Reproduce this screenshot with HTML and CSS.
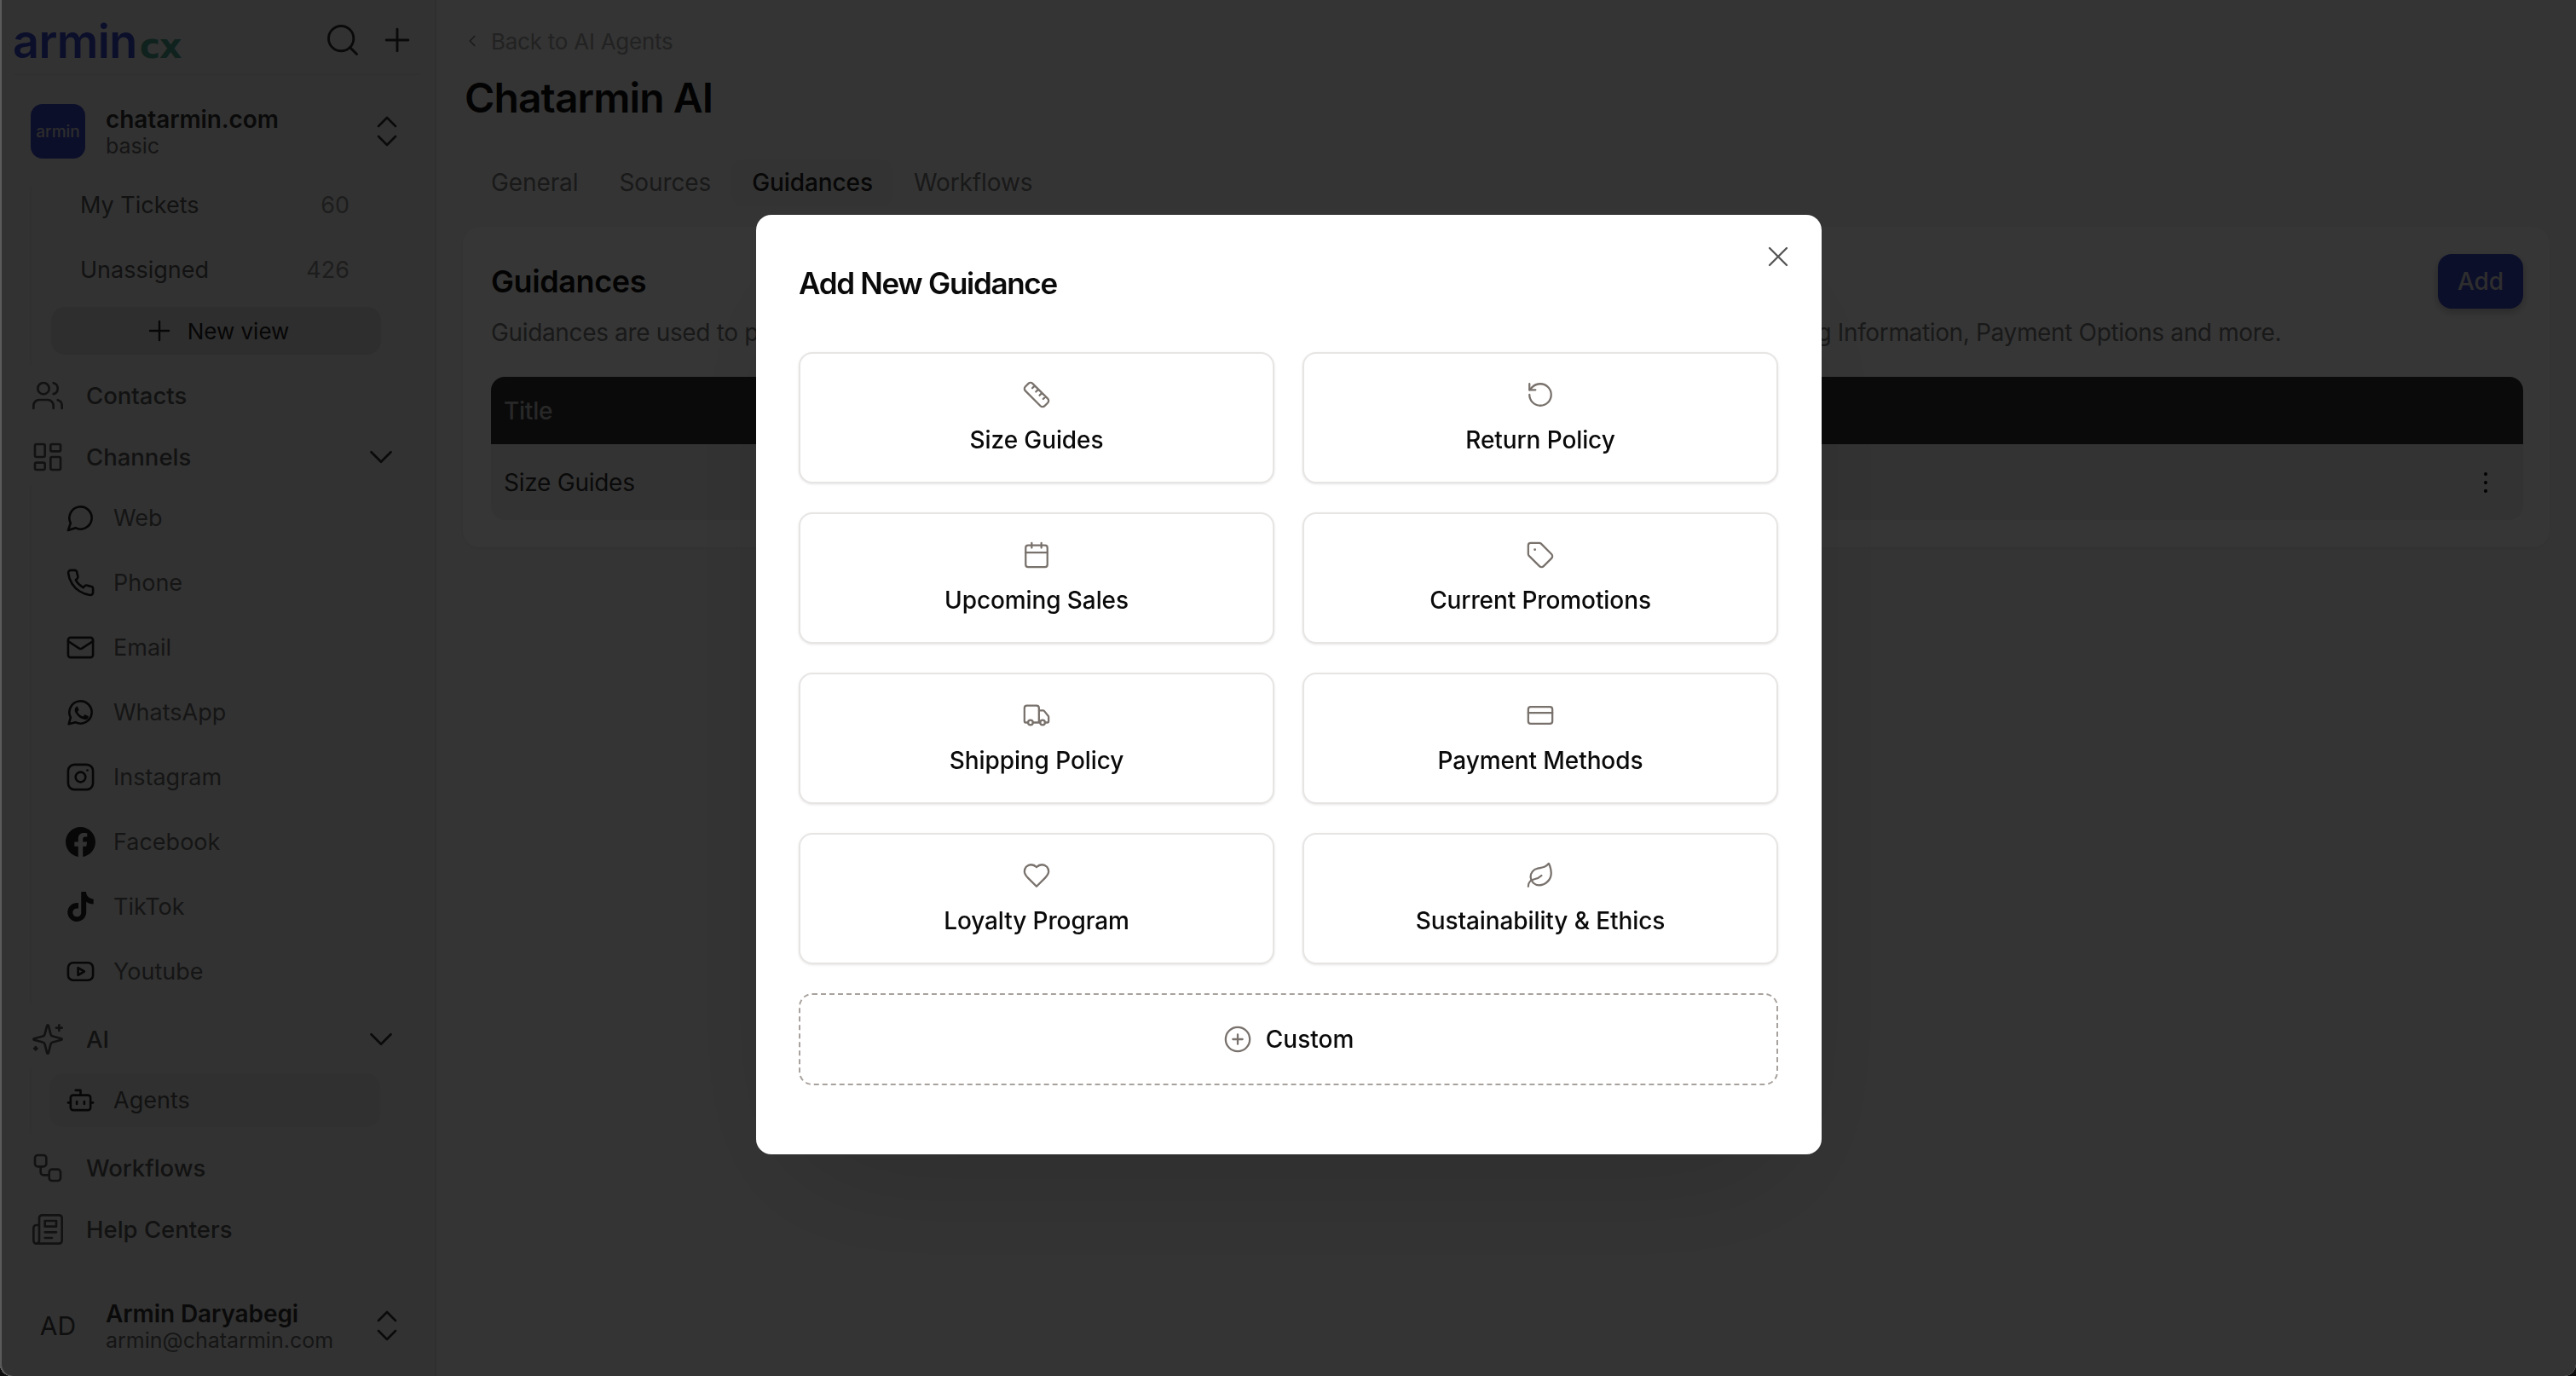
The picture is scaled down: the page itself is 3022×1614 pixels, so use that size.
FILE: index.html
```html
<!DOCTYPE html>
<html lang="en">
<head>
<meta charset="utf-8">
<title>Chatarmin AI</title>
<link rel="stylesheet" href="styles.css">
</head>
<body>
<svg class="sprite" xmlns="http://www.w3.org/2000/svg">
  <symbol id="i-search" viewBox="0 0 24 24"><circle cx="11" cy="11" r="8"/><path d="m21 21-4.3-4.3"/></symbol>
  <symbol id="i-plus" viewBox="0 0 24 24"><path d="M5 12h14M12 5v14"/></symbol>
  <symbol id="i-updown" viewBox="0 0 24 24"><path d="m7 15 5 5 5-5M7 9l5-5 5 5"/></symbol>
  <symbol id="i-down" viewBox="0 0 24 24"><path d="m6 9 6 6 6-6"/></symbol>
  <symbol id="i-users" viewBox="0 0 24 24"><path d="M16 21v-2a4 4 0 0 0-4-4H6a4 4 0 0 0-4 4v2"/><circle cx="9" cy="7" r="4"/><path d="M22 21v-2a4 4 0 0 0-3-3.87M16 3.13a4 4 0 0 1 0 7.75"/></symbol>
  <symbol id="i-grid" viewBox="0 0 24 24"><rect x="3" y="3" width="7" height="9" rx="1"/><rect x="14" y="3" width="7" height="5" rx="1"/><rect x="14" y="12" width="7" height="9" rx="1"/><rect x="3" y="16" width="7" height="5" rx="1"/></symbol>
  <symbol id="i-chat" viewBox="0 0 24 24"><path d="M7.9 20A9 9 0 1 0 4 16.1L2 22Z"/></symbol>
  <symbol id="i-phone" viewBox="0 0 24 24"><path d="M22 16.92v3a2 2 0 0 1-2.18 2 19.79 19.79 0 0 1-8.63-3.07 19.5 19.5 0 0 1-6-6 19.79 19.79 0 0 1-3.07-8.67A2 2 0 0 1 4.11 2h3a2 2 0 0 1 2 1.72 12.84 12.84 0 0 0 .7 2.81 2 2 0 0 1-.45 2.11L8.09 9.91a16 16 0 0 0 6 6l1.27-1.27a2 2 0 0 1 2.11-.45 12.84 12.84 0 0 0 2.81.7A2 2 0 0 1 22 16.92z"/></symbol>
  <symbol id="i-mail" viewBox="0 0 24 24"><rect x="2" y="4" width="20" height="16" rx="2"/><path d="m22 7-8.97 5.7a1.94 1.94 0 0 1-2.06 0L2 7"/></symbol>
  <symbol id="i-whatsapp" viewBox="0 0 24 24"><path d="M7.9 20A9 9 0 1 0 4 16.1L2.5 21.5Z"/><path class="fill" d="M9.2 7.4c-.3 0-.7.1-1 .5-.3.4-.9 1-.9 2.3 0 1.3 1 2.6 1.1 2.8.1.2 1.9 3 4.7 4.1 2.3.9 2.8.7 3.3.7.5 0 1.6-.7 1.8-1.3.2-.6.2-1.2.2-1.3-.1-.1-.3-.2-.6-.3l-2-1c-.3-.1-.5-.1-.7.2l-.9 1.1c-.2.2-.3.2-.6.1-.3-.1-1.2-.5-2.3-1.4-.9-.8-1.5-1.7-1.6-2-.2-.3 0-.5.1-.6l.8-1c.1-.2.1-.3 0-.5l-.9-2.1c-.2-.5-.5-.5-.7-.5h-.8z"/></symbol>
  <symbol id="i-instagram" viewBox="0 0 24 24"><rect x="2" y="2" width="20" height="20" rx="5"/><circle cx="12" cy="12" r="4"/><path d="M17.5 6.5h.01"/></symbol>
  <symbol id="i-facebook" viewBox="0 0 24 24"><path class="fill" d="M24 12.07C24 5.4 18.63 0 12 0S0 5.4 0 12.07c0 6.03 4.39 11.02 10.13 11.93v-8.44H7.08v-3.49h3.05V9.41c0-3.02 1.79-4.69 4.53-4.69 1.31 0 2.68.23 2.68.23v2.97h-1.51c-1.49 0-1.96.93-1.96 1.88v2.27h3.33l-.53 3.49h-2.8V24C19.61 23.09 24 18.1 24 12.07z"/></symbol>
  <symbol id="i-tiktok" viewBox="0 0 24 24"><path class="fill" d="M12.525.02c1.31-.02 2.61-.01 3.91-.02.08 1.53.63 3.09 1.75 4.17 1.12 1.11 2.7 1.62 4.24 1.79v4.03c-1.44-.05-2.89-.35-4.2-.97-.57-.26-1.1-.59-1.62-.93-.01 2.92.01 5.84-.02 8.75-.08 1.4-.54 2.79-1.35 3.94-1.31 1.92-3.58 3.17-5.91 3.21-1.43.08-2.86-.31-4.08-1.03-2.02-1.19-3.44-3.37-3.65-5.71-.02-.5-.03-1-.01-1.49.18-1.9 1.12-3.72 2.58-4.96 1.66-1.44 3.98-2.13 6.15-1.72.02 1.48-.04 2.96-.04 4.44-.99-.32-2.15-.23-3.02.37-.63.41-1.11 1.04-1.36 1.75-.21.51-.15 1.07-.14 1.61.24 1.64 1.82 3.02 3.5 2.87 1.12-.01 2.19-.66 2.77-1.61.19-.33.4-.67.41-1.06.1-1.79.06-3.57.07-5.36.01-4.03-.01-8.05.02-12.07z"/></symbol>
  <symbol id="i-youtube" viewBox="0 0 24 24"><rect x="2" y="5" width="20" height="14" rx="4"/><path d="m10 9 5 3-5 3z"/></symbol>
  <symbol id="i-sparkles" viewBox="0 0 24 24"><path d="M9.937 15.5A2 2 0 0 0 8.5 14.063l-6.135-1.582a.5.5 0 0 1 0-.962L8.5 9.936A2 2 0 0 0 9.937 8.5l1.582-6.135a.5.5 0 0 1 .963 0L14.063 8.5A2 2 0 0 0 15.5 9.937l6.135 1.581a.5.5 0 0 1 0 .964L15.5 14.063a2 2 0 0 0-1.437 1.437l-1.582 6.135a.5.5 0 0 1-.963 0z"/><path d="M20 2v4M22 4h-4M3.5 17.5v2M4.5 18.5h-2"/></symbol>
  <symbol id="i-bot" viewBox="0 0 24 24"><path d="M12 8V4H8"/><rect x="4" y="8" width="16" height="12" rx="2"/><path d="M2 14h2M20 14h2M15 13v2M9 13v2"/></symbol>
  <symbol id="i-workflow" viewBox="0 0 24 24"><rect x="3" y="3" width="8" height="8" rx="2"/><path d="M7 11v4a2 2 0 0 0 2 2h4"/><rect x="13" y="13" width="8" height="8" rx="2"/></symbol>
  <symbol id="i-news" viewBox="0 0 24 24"><path d="M4 22h16a2 2 0 0 0 2-2V4a2 2 0 0 0-2-2H8a2 2 0 0 0-2 2v16a2 2 0 0 1-2 2Zm0 0a2 2 0 0 1-2-2v-9c0-1.1.9-2 2-2h2"/><path d="M18 14h-8M15 18h-5M10 6h8v4h-8V6Z"/></symbol>
  <symbol id="i-kebab" viewBox="0 0 24 24"><circle class="fill" cx="12" cy="5" r="1.5"/><circle class="fill" cx="12" cy="12" r="1.5"/><circle class="fill" cx="12" cy="19" r="1.5"/></symbol>
  <symbol id="i-back" viewBox="0 0 24 24"><path d="m15 18-6-6 6-6"/></symbol>
  <symbol id="i-x" viewBox="0 0 24 24"><path d="M18 6 6 18M6 6l12 12"/></symbol>
  <symbol id="i-ruler" viewBox="0 0 24 24"><path d="M21.3 15.3a2.4 2.4 0 0 1 0 3.4l-2.6 2.6a2.4 2.4 0 0 1-3.4 0L2.7 8.7a2.41 2.41 0 0 1 0-3.4l2.6-2.6a2.41 2.41 0 0 1 3.4 0ZM14.5 12.5l2-2M11.5 9.5l2-2M8.5 6.5l2-2M17.5 15.5l2-2"/></symbol>
  <symbol id="i-return" viewBox="0 0 24 24"><path d="M3 12a9 9 0 1 0 9-9 9.75 9.75 0 0 0-6.74 2.74L3 8"/><path d="M3 3v5h5"/></symbol>
  <symbol id="i-calendar" viewBox="0 0 24 24"><path d="M8 2v4M16 2v4"/><rect x="3" y="4" width="18" height="18" rx="2"/><path d="M3 10h18"/></symbol>
  <symbol id="i-tag" viewBox="0 0 24 24"><path d="M12.586 2.586A2 2 0 0 0 11.172 2H4a2 2 0 0 0-2 2v7.172a2 2 0 0 0 .586 1.414l8.704 8.704a2.426 2.426 0 0 0 3.42 0l6.58-6.58a2.426 2.426 0 0 0 0-3.42z"/><circle class="fill" cx="7.5" cy="7.5" r="1"/></symbol>
  <symbol id="i-truck" viewBox="0 0 24 24"><path d="M14 18V6a2 2 0 0 0-2-2H4a2 2 0 0 0-2 2v11a1 1 0 0 0 1 1h2M15 18H9M19 18h2a1 1 0 0 0 1-1v-3.65a1 1 0 0 0-.22-.624l-3.48-4.35A1 1 0 0 0 17.52 8H14"/><circle cx="17" cy="18" r="2"/><circle cx="7" cy="18" r="2"/></symbol>
  <symbol id="i-card" viewBox="0 0 24 24"><rect x="2" y="5" width="20" height="14" rx="2"/><path d="M2 10h20"/></symbol>
  <symbol id="i-heart" viewBox="0 0 24 24"><path d="M19 14c1.49-1.46 3-3.21 3-5.5A5.5 5.5 0 0 0 16.5 3c-1.76 0-3 .5-4.5 2-1.5-1.5-2.74-2-4.5-2A5.5 5.5 0 0 0 2 8.5c0 2.3 1.5 4.05 3 5.5l7 7Z"/></symbol>
  <symbol id="i-leaf" viewBox="0 0 24 24"><path d="M11 20A7 7 0 0 1 9.8 6.1C15.5 5 17 4.48 19 2c1 2 2 4.18 2 8 0 5.5-4.78 10-10 10Z"/><path d="M2 21c0-3 1.85-5.36 5.08-6C9.5 14.52 12 13 13 12"/></symbol>
  <symbol id="i-pluscircle" viewBox="0 0 24 24"><circle cx="12" cy="12" r="10"/><path d="M8 12h8M12 8v8"/></symbol>
</svg>

<div class="app">
  <aside class="sidebar">
    <header class="side-head">
      <div class="logo"><span class="logo-a">armin</span><span class="logo-b">cx</span></div>
      <div class="head-actions">
        <svg class="ic ic-head"><use href="#i-search"/></svg>
        <svg class="ic ic-head"><use href="#i-plus"/></svg>
      </div>
    </header>

    <div class="account account-top">
      <div class="avatar avatar-brand">armin</div>
      <div class="account-text">
        <div class="account-name">chatarmin.com</div>
        <div class="account-sub">basic</div>
      </div>
      <svg class="ic ic-updown"><use href="#i-updown"/></svg>
    </div>

    <div class="tree tree-views">
      <div class="view-row"><span>My Tickets</span><span class="count">60</span></div>
      <div class="view-row"><span>Unassigned</span><span class="count">426</span></div>
      <div class="new-view"><svg class="ic ic-newplus"><use href="#i-plus"/></svg><span>New view</span></div>
    </div>

    <nav class="nav nav-a">
      <div class="nav-row"><svg class="ic ic-nav"><use href="#i-users"/></svg><span>Contacts</span></div>
      <div class="nav-row"><svg class="ic ic-nav"><use href="#i-grid"/></svg><span>Channels</span><svg class="ic ic-down"><use href="#i-down"/></svg></div>
    </nav>

    <div class="tree tree-channels">
      <div class="sub-row"><svg class="ic ic-sub"><use href="#i-chat"/></svg><span>Web</span></div>
      <div class="sub-row"><svg class="ic ic-sub"><use href="#i-phone"/></svg><span>Phone</span></div>
      <div class="sub-row"><svg class="ic ic-sub"><use href="#i-mail"/></svg><span>Email</span></div>
      <div class="sub-row"><svg class="ic ic-sub"><use href="#i-whatsapp"/></svg><span>WhatsApp</span></div>
      <div class="sub-row"><svg class="ic ic-sub"><use href="#i-instagram"/></svg><span>Instagram</span></div>
      <div class="sub-row"><svg class="ic ic-sub"><use href="#i-facebook"/></svg><span>Facebook</span></div>
      <div class="sub-row"><svg class="ic ic-sub"><use href="#i-tiktok"/></svg><span>TikTok</span></div>
      <div class="sub-row"><svg class="ic ic-sub"><use href="#i-youtube"/></svg><span>Youtube</span></div>
    </div>

    <nav class="nav nav-b">
      <div class="nav-row"><svg class="ic ic-nav"><use href="#i-sparkles"/></svg><span>AI</span><svg class="ic ic-down"><use href="#i-down"/></svg></div>
    </nav>

    <div class="tree tree-ai">
      <div class="sub-row sub-row-active"><svg class="ic ic-sub"><use href="#i-bot"/></svg><span>Agents</span></div>
    </div>

    <nav class="nav nav-c">
      <div class="nav-row"><svg class="ic ic-nav"><use href="#i-workflow"/></svg><span>Workflows</span></div>
      <div class="nav-row"><svg class="ic ic-nav"><use href="#i-news"/></svg><span>Help Centers</span></div>
    </nav>

    <div class="account account-bottom">
      <div class="avatar avatar-user">AD</div>
      <div class="account-text">
        <div class="account-name">Armin Daryabegi</div>
        <div class="account-sub account-mail">armin@chatarmin.com</div>
      </div>
      <svg class="ic ic-updown"><use href="#i-updown"/></svg>
    </div>
  </aside>

  <main class="main">
    <a class="back"><svg class="ic ic-back"><use href="#i-back"/></svg><span>Back to AI Agents</span></a>
    <h1 class="page-title">Chatarmin AI</h1>
    <div class="tabs">
      <div class="tab">General</div>
      <div class="tab">Sources</div>
      <div class="tab tab-active">Guidances</div>
      <div class="tab">Workflows</div>
    </div>
    <section class="panel">
      <div class="panel-head">
        <div>
          <h2 class="panel-title">Guidances</h2>
          <p class="panel-desc">Guidances are used to provide your AI Agent with important information about your Store, such as Store Policies, Shipping Information, Payment Options and more.</p>
        </div>
        <button class="add-btn">Add</button>
      </div>
      <div class="table">
        <div class="table-head">Title</div>
        <div class="table-row"><span>Size Guides</span><svg class="ic ic-kebab"><use href="#i-kebab"/></svg></div>
      </div>
    </section>
  </main>
</div>

<div class="overlay">
  <div class="modal" role="dialog">
    <svg class="ic modal-close"><use href="#i-x"/></svg>
    <h3 class="modal-title">Add New Guidance</h3>
    <div class="choices">
      <div class="choice"><svg class="ic ic-choice"><use href="#i-ruler"/></svg><span>Size Guides</span></div>
      <div class="choice"><svg class="ic ic-choice"><use href="#i-return"/></svg><span>Return Policy</span></div>
      <div class="choice"><svg class="ic ic-choice"><use href="#i-calendar"/></svg><span>Upcoming Sales</span></div>
      <div class="choice"><svg class="ic ic-choice"><use href="#i-tag"/></svg><span>Current Promotions</span></div>
      <div class="choice"><svg class="ic ic-choice"><use href="#i-truck"/></svg><span>Shipping Policy</span></div>
      <div class="choice"><svg class="ic ic-choice"><use href="#i-card"/></svg><span>Payment Methods</span></div>
      <div class="choice"><svg class="ic ic-choice"><use href="#i-heart"/></svg><span>Loyalty Program</span></div>
      <div class="choice"><svg class="ic ic-choice"><use href="#i-leaf"/></svg><span>Sustainability &amp; Ethics</span></div>
    </div>
    <div class="custom"><svg class="ic ic-choice"><use href="#i-pluscircle"/></svg><span>Custom</span></div>
  </div>
</div>
</body>
</html>
```

FILE: styles.css
```css
* { box-sizing: border-box; }
html, body { margin: 0; height: 100%; background: #0c0c0c; }
body {
  width: 3022px;
  height: 1614px;
  overflow: hidden;
  font-family: Inter, "Liberation Sans", sans-serif;
  font-size: 28px;
  color: #0a0a0a;
}
.sprite { display: none; }
.ic { display: block; flex: none; fill: none; stroke: currentColor; stroke-linecap: round; stroke-linejoin: round; }
.fill { fill: currentColor; stroke: none; }

.app {
  display: flex;
  width: 3022px;
  height: 1614px;
  background: #f5f5f5;
  border-radius: 0 0 14px 14px;
  overflow: hidden;
}

/* Sidebar */
.sidebar {
  width: 512px;
  flex: none;
  display: flex;
  flex-direction: column;
  background: #ededed;
  border-right: 2px solid #dcdcdc;
  color: #555;
}
.side-head {
  height: 88px;
  margin: 0 16px;
  border-bottom: 2px solid #e4e4e4;
  display: flex;
  align-items: center;
  justify-content: space-between;
  flex: none;
}
.logo { display: flex; align-items: baseline; margin-top: 12px; margin-left: -1px; }
.logo-a { font-size: 54px; font-weight: 600; color: #3a48c8; letter-spacing: -0.6px; line-height: 1; }
.logo-b { font-family: "DejaVu Sans", sans-serif; font-weight: 700; font-size: 41px; line-height: 1; margin-left: 3px; color: #4f9f8a; letter-spacing: -1px; }
.head-actions { display: flex; gap: 20px; margin: 8px 6px 0 0; color: #333; }
.ic-head { width: 44px; height: 44px; stroke-width: 1.6; }

.account { display: flex; align-items: center; height: 64px; flex: none; padding-left: 36px; }
.account-top { margin-top: 34px; }
.account-bottom { margin-top: auto; margin-bottom: 27px; }
.avatar { width: 64px; height: 64px; flex: none; display: flex; align-items: center; justify-content: center; }
.avatar-brand { background: #3b46c4; color: #d0d0d0; border-radius: 14px; font-size: 19px; font-weight: 500; }
.avatar-user { border-radius: 50%; background: #ececec; font-size: 30px; color: #444; }
.account-text { margin-left: 24px; flex: 1; min-width: 0; }
.account-name { font-size: 28px; font-weight: 600; line-height: 34px; color: #333; white-space: nowrap; letter-spacing: -0.1px; }
.account-sub { font-size: 25px; line-height: 30px; color: #666; margin-top: -1px; }
.account-mail { white-space: nowrap; }
.ic-updown { width: 48px; height: 48px; stroke-width: 1.35; color: #333; margin-right: 32px; }

.tree { margin-left: 35px; border-left: 2px solid #e2e2e2; flex: none; }
.tree-views { margin-top: 32px; padding-bottom: 14px; }
.view-row {
  height: 44px;
  margin-bottom: 32px;
  padding: 0 100px 0 57px;
  display: flex;
  align-items: center;
  justify-content: space-between;
  font-size: 27px;
  color: #555;
}
.view-row:nth-child(2) { margin-bottom: 22px; }
.count { color: #888; }
.new-view {
  margin-left: 23px;
  width: 387px;
  height: 56px;
  border-radius: 16px;
  background: #d8d8d8;
  display: flex;
  align-items: center;
  justify-content: center;
  gap: 14px;
  font-size: 26px;
  color: #222;
}
.ic-newplus { width: 38px; height: 38px; stroke-width: 1.5; }

.nav { display: flex; flex-direction: column; gap: 4px; flex: none; }
.nav-b { margin-top: 8px; }
.nav-c { margin-top: 5px; }
.nav-row {
  height: 68px;
  display: flex;
  align-items: center;
  padding-left: 36px;
  gap: 25px;
  font-size: 27.5px;
  font-weight: 500;
  color: #555;
}
.ic-nav { width: 40px; height: 40px; stroke-width: 1.6; color: #555; }
.ic-down { width: 46px; height: 46px; stroke-width: 1.45; color: #333; margin-left: auto; margin-right: 40px; }

.tree-channels { margin-top: -1px; }
.sub-row {
  height: 76px;
  margin-left: 21px;
  padding-left: 19px;
  width: 388px;
  display: flex;
  align-items: center;
  gap: 21px;
  font-size: 27px;
  color: #666;
}
.ic-sub { width: 35px; height: 35px; stroke-width: 1.8; color: #222; }
.tree-ai { padding: 6px 0 9px; }
.sub-row-active { height: 63px; background: #e3e3e3; border-radius: 16px; color: #555; }

/* Main */
.main { flex: 1; min-width: 0; padding: 0 31px 0 31px; letter-spacing: -0.25px; }
.back { display: flex; align-items: center; height: 40px; margin-top: 28px; gap: 11px; font-size: 26px; color: #a0a0a0; }
.ic-back { width: 22px; height: 22px; stroke-width: 1.8; color: #777; }
.page-title { margin: 22px 0 0 2px; font-size: 48px; font-weight: 600; line-height: 50px; color: #111; letter-spacing: -0.9px; }
.tabs { display: flex; margin-top: 46px; height: 56px; padding-left: 9px; letter-spacing: -0.1px; }
.tab { padding: 0 24px; display: flex; align-items: center; color: #777; border-radius: 14px; }
.tab-active { background: #f1f1f1; color: #222; font-weight: 500; }
.panel { margin-top: 24px; height: 376px; background: #fff; border-radius: 20px; padding: 32px 31px 32px 33px; box-shadow: 0 1px 4px rgba(0,0,0,.06); }
.panel-head { display: flex; justify-content: space-between; align-items: flex-start; height: 144px; }
.panel-title { margin: 10px 0 0; font-size: 36px; font-weight: 600; line-height: 44px; color: #111; letter-spacing: -0.4px; }
.panel-desc { margin: 20px 0 0; font-size: 28px; line-height: 36px; color: #777; white-space: nowrap; letter-spacing: -0.35px; }
.add-btn {
  width: 100px;
  height: 64px;
  border: 0;
  border-radius: 16px;
  background: #3b46c4;
  color: #d8d8d8;
  font: 500 28px Inter, sans-serif;
  box-shadow: 0 4px 10px rgba(0,0,0,.25);
}
.table { border-radius: 16px; overflow: hidden; }
.table-head { height: 79px; padding-left: 15px; display: flex; align-items: center; background: #333; color: #bbb; font-weight: 500; }
.table-row { height: 89px; padding: 0 27px 0 15px; display: flex; align-items: center; justify-content: space-between; background: #f1f1f1; color: #333; }
.ic-kebab { width: 34px; height: 34px; color: #111; }

/* Overlay + modal */
.overlay {
  position: fixed;
  inset: 0;
  background: rgba(0,0,0,.79);
  box-shadow: inset 2px 0 0 #5a5a5a;
  border-radius: 0 0 14px 14px;
  padding: 252px 0 0 887px;
}
.modal {
  position: relative;
  width: 1250px;
  height: 1102px;
  background: #fff;
  border-radius: 18px;
  padding: 0 50px;
  box-shadow: 0 60px 160px -40px rgba(0,0,0,.16);
}
.modal-close { position: absolute; top: 29px; right: 31px; width: 40px; height: 40px; stroke-width: 1.4; color: #555; }
.modal-title { margin: 0; padding-top: 57px; height: 161px; font-size: 35px; line-height: 46px; font-weight: 600; color: #0a0a0a; letter-spacing: -1.3px; }
.choices { display: grid; grid-template-columns: 558px 558px; column-gap: 33px; row-gap: 34px; }
.choice {
  height: 154px;
  background: #fff;
  border: 2px solid #e7e5e4;
  border-radius: 16px;
  box-shadow: 0 1px 3px rgba(0,0,0,.1);
  display: flex;
  flex-direction: column;
  align-items: center;
  padding-top: 31px;
  gap: 18px;
  font-weight: 450;
  letter-spacing: -0.1px;
  color: #0a0a0a;
  line-height: 36px;
}
.ic-choice { width: 34px; height: 34px; stroke-width: 1.6; color: #78716c; }
.custom {
  margin-top: 34px;
  height: 108px;
  width: 1149px;
  border: 2px dashed #a8a29e;
  border-radius: 16px;
  display: flex;
  align-items: center;
  justify-content: center;
  gap: 16px;
  font-weight: 450;
  color: #0a0a0a;
}
```
